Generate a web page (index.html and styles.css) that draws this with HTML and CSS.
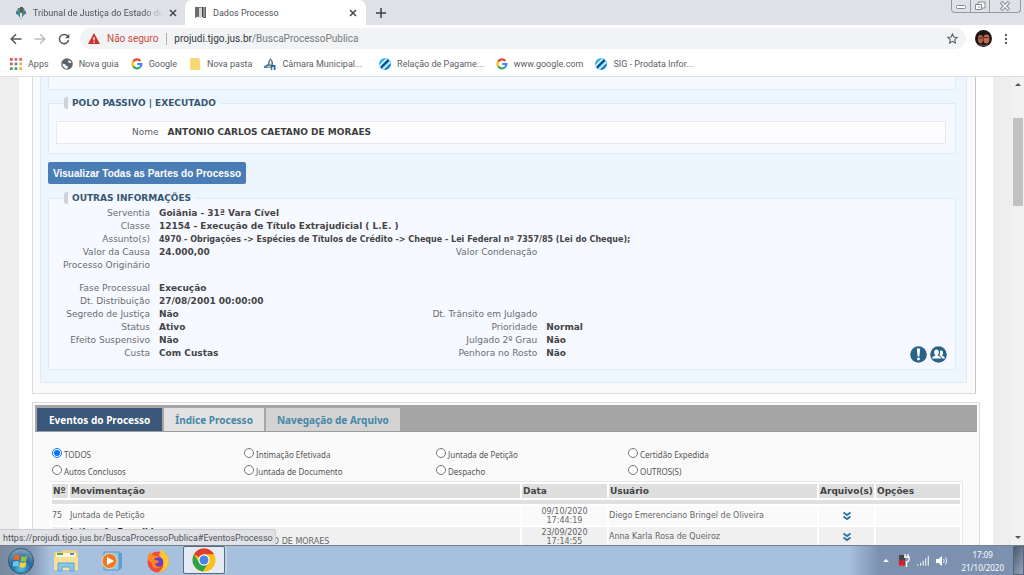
FILE: index.html
```html
<!DOCTYPE html>
<html lang="pt-BR">
<head>
<meta charset="utf-8">
<title>Dados Processo</title>
<link rel="stylesheet" href="styles.css">
</head>
<body>
<svg class="defs" aria-hidden="true">
  <symbol id="google" viewBox="0 0 12 12">
    <g fill="none" stroke-width="2.2"><path d="M2.2 3.6A4.4 4.4 0 0 1 9.3 2.9" stroke="#ea4335"/><path d="M2.2 8.2a4.5 4.5 0 0 1 0-4.6" stroke="#fbbc05"/><path d="M9 9.2a4.4 4.4 0 0 1-6.8-1" stroke="#34a853"/><path d="M6.2 6h4.2A4.4 4.4 0 0 1 9 9.2" stroke="#4285f4"/></g>
  </symbol>
  <symbol id="prodata" viewBox="0 0 12 12">
    <circle cx="6" cy="6" r="6" fill="#35b4e4"/><path d="M.8 8 7.500.8" stroke="#e9f8ff" stroke-width="1.500"/><path d="M2 9.500 9.500 2" stroke="#174a86" stroke-width="1.800"/><path d="M4 11 11 4.200" stroke="#e9f8ff" stroke-width="1.500"/><path d="M6.500 11.500 11.500 6.500" stroke="#2368a8" stroke-width="1.200"/>
  </symbol>
  <symbol id="close" viewBox="0 0 8 8"><path d="M1 1 7 7M7 1 1 7" stroke="#45494d" stroke-width="1.500"/></symbol>
  <symbol id="more" viewBox="0 0 10 10"><path d="M1.500 1.500 5 4l3.500-2.500M1.500 5.500 5 8l3.500-2.500" fill="none" stroke="#2f74a3" stroke-width="1.900"/></symbol>
</svg>

<header class="tabstrip">
  <div class="tab">
    <svg class="fav" viewBox="0 0 12 12"><path d="M3 1h6l1 3-1 4-3 4-3-4-1-4z" fill="#4c8d83"/><path d="M5 0h3v5H5z" fill="#6e5442"/><path d="M1 4l3 1v3L1 7zM8 5l3-1v3L8 8z" fill="#3f7d9b"/><path d="M5 6h2v5H5z" fill="#d9e4cf"/></svg>
    <span class="tab-title faded">Tribunal de Justiça do Estado de</span>
    <button class="icon-btn" aria-label="Fechar guia"><svg class="x"><use href="#close"/></svg></button>
  </div>
  <div class="tab active">
    <svg class="fav wide" viewBox="0 0 13 12"><path d="M1 0h11v10H1z" fill="#8d8d8d"/><path d="M1 0h4v9l-4 2z" fill="#6d6d6d"/><path d="M5 1h3v10H5z" fill="#d4d4d4"/><path d="M8 0h1v10H8z" fill="#444"/><path d="M12 0v11H9v-1h2V0z" fill="#666"/></svg>
    <span class="tab-title">Dados Processo</span>
    <button class="icon-btn" aria-label="Fechar guia"><svg class="x"><use href="#close"/></svg></button>
  </div>
  <button class="icon-btn new-tab" aria-label="Nova guia"><svg viewBox="0 0 10 10" width="10" height="10"><path d="M5 0v10M0 5h10" stroke="#3c4043" stroke-width="1.500"/></svg></button>
  <div class="win-controls">
    <button aria-label="Minimizar"><svg viewBox="0 0 12 10" width="12" height="10"><rect x="1.500" y="4.500" width="9" height="3" rx="1" fill="#fff" stroke="#85888d"/></svg></button>
    <button aria-label="Restaurar"><svg viewBox="0 0 12 10" width="12" height="10"><path d="M4 1h7v6H4z" fill="#fff" stroke="#85888d"/><path d="M1.500 3.500h6v5h-6z" fill="#fff" stroke="#85888d"/><path d="M4 5.500h2v1H4z" fill="#85888d"/></svg></button>
    <button class="win-close" aria-label="Fechar"><svg viewBox="0 0 12 10" width="12" height="10"><path d="M2 1 10 9M10 1 2 9" stroke="#85888d" stroke-width="3.400"/><path d="M2.500 1.500l7 7M9.500 1.500l-7 7" stroke="#f3f4f6" stroke-width="1.600"/></svg></button>
  </div>
</header>

<nav class="toolbar">
  <button class="icon-btn" aria-label="Voltar"><svg viewBox="0 0 12 12" width="12" height="12"><path d="M11.500 6H1.500M6 1.200 1.200 6 6 10.800" fill="none" stroke="#55595e" stroke-width="1.500"/></svg></button>
  <button class="icon-btn" aria-label="Avançar"><svg viewBox="0 0 12 12" width="12" height="12"><path d="M.5 6h10M6 1.200 10.800 6 6 10.800" fill="none" stroke="#bbbdc0" stroke-width="1.500"/></svg></button>
  <button class="icon-btn" aria-label="Recarregar"><svg viewBox="0 0 12 12" width="12" height="12"><path d="M10 3.600A4.600 4.600 0 1 0 10.600 7" fill="none" stroke="#55595e" stroke-width="1.500"/><path d="M11.400.8v4.400H7z" fill="#55595e"/></svg></button>
  <div class="omnibox">
    <svg viewBox="0 0 12 11" width="12" height="11"><path d="M6 0l6 11H0z" fill="#c5352b"/><path d="M6 4v3.500M6 8.500V10" stroke="#fff" stroke-width="1.200"/></svg>
    <span class="insecure">Não seguro</span>
    <span class="url">projudi.tjgo.jus.br<span class="path">/BuscaProcessoPublica</span></span>
    <button class="icon-btn star" aria-label="Favoritar"><svg viewBox="0 0 12 12" width="11" height="11"><path d="M6 1l1.500 3.400 3.700.4-2.800 2.500.8 3.700L6 9.100 2.800 11l.8-3.700L.8 4.800l3.700-.4z" fill="none" stroke="#5f6368" stroke-width="1.200"/></svg></button>
  </div>
  <button class="icon-btn" aria-label="Perfil"><svg viewBox="0 0 17 17" width="17" height="17"><circle cx="8.500" cy="8.500" r="8.500" fill="#1c1715"/><path d="M3 8q0-3 2.500-3T8 8v3q-1 2.500-2.500 2.500T3 11z" fill="#a8654a"/><path d="M8.500 7.500q.5-3 3-3t2.800 3v3q-.5 3-3 3t-2.800-3z" fill="#c4694c"/><path d="M3.500 8h4M9 7.500h4.500" stroke="#54291f" stroke-width="1.200"/><path d="M4 13.500q4 3 9.500 0l-1 2.500h-7z" fill="#5d4a42"/></svg></button>
  <button class="icon-btn" aria-label="Menu"><svg viewBox="0 0 4 12" width="4" height="12" fill="#5f6368"><circle cx="2" cy="2" r="1.200"/><circle cx="2" cy="6" r="1.200"/><circle cx="2" cy="10" r="1.200"/></svg></button>
</nav>

<nav class="bookmarks">
  <a href="#"><svg viewBox="0 0 11 11"><path d="M0 0h2.500v2.500H0zM0 4.200h2.500v2.500H0z" fill="#e2574c"/><path d="M4.200 0h2.500v2.500H4.200zM8.500 0H11v2.500H8.500z" fill="#d8695c"/><path d="M4.200 4.200h2.500v2.500H4.200z" fill="#4a86d9"/><path d="M8.500 4.200H11v2.500H8.500zM8.500 8.500H11V11H8.500z" fill="#eab13c"/><path d="M0 8.500h2.500V11H0zM4.200 8.500h2.500V11H4.200z" fill="#4a9f5c"/></svg>Apps</a>
  <a href="#"><svg viewBox="0 0 12 12"><circle cx="6" cy="6" r="5.800" fill="#5f6368"/><path d="M1.500 5.500l3 1 .8 1.500 1.700.3-.5 2.200-1.500.3Q1.500 9 1.500 5.500zM6 1.500l2 .5-1 1.800 1.500 1.200 2 0Q9.500 2 6 1.500z" fill="#fff"/></svg>Nova guia</a>
  <a href="#"><svg><use href="#google"/></svg>Google</a>
  <a href="#"><svg viewBox="0 0 11 11"><path d="M1 0h8.500v2l.8.8V11H1z" fill="#f6d973"/></svg>Nova pasta</a>
  <a href="#" class="municipal"><svg viewBox="0 0 12 12"><path d="M0 8l4-2 4 3v1H0z" fill="#3f87c4"/><path d="M4 7V4l2.500-4L9 4v5H4z" fill="#5b7384"/><path d="M5.500 6.500V4l1-2 1 2v2.500z" fill="#e8eef0"/><path d="M7 7h4.500v5H7z" fill="#2b6aac"/><path d="M3 8.500l3-1 1 1.500-3 1z" fill="#e4c65a"/><path d="M8 9h2v3H8z" fill="#b9dcf2"/></svg>Câmara Municipal...</a>
  <a href="#"><svg><use href="#prodata"/></svg>Relação de Pagame...</a>
  <a href="#"><svg><use href="#google"/></svg>www.google.com</a>
  <a href="#"><svg><use href="#prodata"/></svg>SIG - Prodata Infor...</a>
</nav>

<div class="viewport">
  <main class="page">
    <section class="panel process">
      <div class="sheet">
        <div class="group cut"></div>
        <fieldset class="group party">
          <legend>POLO PASSIVO | EXECUTADO</legend>
          <div class="party-row"><span>Nome</span><b>ANTONIO CARLOS CAETANO DE MORAES</b></div>
        </fieldset>
        <button class="primary">Visualizar Todas as Partes do Processo</button>
        <fieldset class="group info">
          <legend>OUTRAS INFORMAÇÕES</legend>
          <dl>
            <dt>Serventia</dt><dd class="full">Goiânia - 31ª Vara Cível</dd>
            <dt>Classe</dt><dd class="full">12154 - Execução de Título Extrajudicial ( L.E. )</dd>
            <dt>Assunto(s)</dt><dd class="full small">4970 - Obrigações -&gt; Espécies de Títulos de Crédito -&gt; Cheque - Lei Federal nº 7357/85 (Lei do Cheque);</dd>
            <dt>Valor da Causa</dt><dd>24.000,00</dd><dt>Valor Condenação</dt><dd></dd>
            <dt>Processo Originário</dt><dd class="full"></dd>
          </dl>
          <dl>
            <dt>Fase Processual</dt><dd class="full">Execução</dd>
            <dt>Dt. Distribuição</dt><dd class="full">27/08/2001 00:00:00</dd>
            <dt>Segredo de Justiça</dt><dd>Não</dd><dt>Dt. Trânsito em Julgado</dt><dd></dd>
            <dt>Status</dt><dd>Ativo</dd><dt>Prioridade</dt><dd>Normal</dd>
            <dt>Efeito Suspensivo</dt><dd>Não</dd><dt>Julgado 2º Grau</dt><dd>Não</dd>
            <dt>Custa</dt><dd>Com Custas</dd><dt>Penhora no Rosto</dt><dd>Não</dd>
          </dl>
          <div class="actions">
            <button class="icon-btn" aria-label="Pendências"><svg viewBox="0 0 17 17" width="17" height="17"><circle cx="8.500" cy="8.500" r="8.300" fill="#286388"/><path d="M6.800 2.500h3.400l-.8 8H7.600z" fill="#fff"/><circle cx="8.500" cy="13" r="1.400" fill="#fff"/></svg></button>
            <button class="icon-btn" aria-label="Responsáveis"><svg viewBox="0 0 17 17" width="17" height="17"><circle cx="8.500" cy="8.500" r="8.300" fill="#286388"/><g fill="#fff"><ellipse cx="6.500" cy="6.500" rx="2.300" ry="3"/><path d="M2 12.500q0-2 3.300-2.800V8h2.400v1.700q3.300.8 3.300 2.800zM10 4.500q3.500-.5 3 3-.2 1.500-1 2 3 .8 3 3h-3q-.2-2-2.500-3.200 1-1.800.5-4.800z"/></g></svg></button>
          </div>
        </fieldset>
      </div>
    </section>

    <section class="panel events">
      <div class="subtabs">
        <button class="selected">Eventos do Processo</button>
        <button class="light">Índice Processo</button>
        <button>Navegação de Arquivo</button>
      </div>
      <div class="events-body">
        <div class="filters">
          <label><input type="radio" name="tipo" checked>TODOS</label>
          <label><input type="radio" name="tipo">Intimação Efetivada</label>
          <label><input type="radio" name="tipo">Juntada de Petição</label>
          <label><input type="radio" name="tipo">Certidão Expedida</label>
          <label><input type="radio" name="tipo">Autos Conclusos</label>
          <label><input type="radio" name="tipo">Juntada de Documento</label>
          <label><input type="radio" name="tipo">Despacho</label>
          <label><input type="radio" name="tipo">OUTROS(S)</label>
        </div>
        <table>
          <colgroup><col class="c-num"><col><col class="c-date"><col class="c-user"><col class="c-file"><col class="c-opt"></colgroup>
          <thead>
            <tr><th>Nº</th><th>Movimentação</th><th>Data</th><th>Usuário</th><th>Arquivo(s)</th><th>Opções</th></tr>
            <tr class="rule"><td colspan="6"></td></tr>
          </thead>
          <tbody>
            <tr><td>75</td><td>Juntada de Petição</td><td class="mid">09/10/2020<br>17:44:19</td><td>Diego Emerenciano Bringel de Oliveira</td><td class="mid"><button class="icon-btn" aria-label="Ver arquivos"><svg class="chev"><use href="#more"/></svg></button></td><td></td></tr>
            <tr class="alt"><td></td><td><b>Intimação Expedida</b><br>Para o Polo Passivo | Executado: ANTONIO CAETANO DE MORAES</td><td class="mid">23/09/2020<br>17:14:55</td><td>Anna Karla Rosa de Queiroz</td><td class="mid"><button class="icon-btn" aria-label="Ver arquivos"><svg class="chev"><use href="#more"/></svg></button></td><td></td></tr>
          </tbody>
        </table>
      </div>
    </section>
  </main>
  <div class="scrollbar"><i class="up"></i><span class="track"><span class="thumb"></span></span><i class="down"></i></div>
  <div class="status">https://projudi.tjgo.jus.br/BuscaProcessoPublica#EventosProcesso</div>
</div>

<footer class="taskbar">
  <button class="start" aria-label="Iniciar"><svg viewBox="0 0 26 26" width="26" height="26"><defs><radialGradient id="orb" cx=".5" cy=".8" r=".8"><stop offset="0" stop-color="#4fc0e6"/><stop offset=".5" stop-color="#27679c"/><stop offset="1" stop-color="#8fabbf"/></radialGradient></defs><circle cx="13" cy="13" r="12.500" fill="url(#orb)" stroke="#285577"/><path d="M6 8q3-2 6-.5l-.8 5q-3-1.500-6 .3z" fill="#e8672f"/><path d="M13.200 8q3 1.500 6 0l-.8 5q-3 1.500-6 0z" fill="#8cc63f"/><path d="M5 14q3-1.800 6-.4l-.8 5q-3-1.500-5.500.2z" fill="#6cc4ee"/><path d="M12.200 14.200q3 1.500 6-.1l-.8 5q-3 1.500-6 0z" fill="#fbd03c"/></svg></button>
  <button class="app" aria-label="Explorer"><svg viewBox="0 0 26 24" width="26" height="24"><path d="M1 3h7l2-2h13l2 3v17H1z" fill="#ecd07e"/><path d="M3 4h20v4H3z" fill="#fff7d6"/><path d="M4 5h6" stroke="#58a55c" stroke-width="2"/><path d="M17 5h4" stroke="#4f8ad3" stroke-width="2"/><path d="M1 8h24v13H1z" fill="#f5e09b"/><path d="M5 22v-8h16v8h-4v-4H9v4z" fill="#8ac7e8" stroke="#5fa3cc"/></svg></button>
  <button class="app" aria-label="Media Player"><svg viewBox="0 0 24 24" width="24" height="24"><path d="M9 3l13 1v15l-3 2V5z" fill="#5aa0d0"/><path d="M4 3h15v18H4z" fill="#8ec6e8" stroke="#5b9cc8"/><circle cx="9.500" cy="12" r="7.500" fill="#ec7a22" stroke="#f7d6b2"/><path d="M7 8l7 4-7 4z" fill="#fff"/></svg></button>
  <button class="app" aria-label="Firefox"><svg viewBox="0 0 24 24" width="24" height="24"><circle cx="12" cy="13" r="10.500" fill="#f04a3e"/><path d="M13 6q1-4 4-6 0 3 3 5.500 4 4 2.500 10Q20 23 12 23.500 19 19 17 12z" fill="#ffc62e"/><path d="M2 11Q1 7 4 3q1 3 4 3.500 4 .5 6 2l-4 3-2 4z" fill="#ff8a23"/><circle cx="12.500" cy="13" r="4.800" fill="#6b3fc4"/><path d="M6 12q2-2 7 0-1 3-4 2.500 1 4 6 3-3 3-7 1-3-2-2-6.500z" fill="#ff8324"/></svg></button>
  <button class="app running" aria-label="Chrome"><svg viewBox="0 0 24 24" width="24" height="24"><circle cx="12" cy="12" r="11.500" fill="#fbc116"/><path d="M12 12 2 6.300A11.500 11.500 0 0 1 22 6.300H12z" fill="#de3d31"/><path d="M2 6.300A11.500 11.500 0 0 0 11 23.400l5.500-9L7.500 15z" fill="#2da24c"/><circle cx="12" cy="12" r="5.700" fill="#fff"/><circle cx="12" cy="12" r="4.500" fill="#4a83e3"/></svg></button>
  <div class="tray">
    <i class="tray-up"></i>
    <svg viewBox="0 0 12 14" width="12" height="14"><path d="M1 1h6v10H1z" fill="#4b4542"/><path d="M7 0v3M10 0v3M6 3h5v3q-1 2-2.500 2v5" fill="none" stroke="#fff" stroke-width="1.300"/><path d="M1.500 6.500l5 5M6.500 6.500l-5 5" stroke="#df1f29" stroke-width="2.600"/></svg>
    <svg viewBox="0 0 14 12" width="14" height="12"><path d="M1 11V9h1.500v2zM4 11V7.500h1.500V11zM6.500 11V5.500H8V11zM9 11V3h1.500v8zM11.500 11V0.500H13V11z" fill="#fff" stroke="#687d96" stroke-width=".4"/></svg>
    <svg viewBox="0 0 12 12" width="12" height="12"><path d="M0 4h2.500L6 1v10L2.500 8H0z" fill="#fff"/><path d="M7.500 4q1.500 2 0 4M9.500 2.500q2.600 3.500 0 7" fill="none" stroke="#e8eef5"/></svg>
    <time>17:09<br>21/10/2020</time>
    <button class="desktop" aria-label="Mostrar área de trabalho"></button>
  </div>
</footer>
</body>
</html>
```

FILE: styles.css
```css
* { box-sizing: border-box; }

body {
  margin: 0;
  height: 100vh;
  display: flex;
  flex-direction: column;
  overflow: hidden;
  font-family: Roboto, "Noto Sans", sans-serif;
  font-size: 9px;
  color: #5f6368;
  background: #fff;
}

button { font: inherit; border: 0; padding: 0; background: none; }
svg { display: block; flex: none; }
.defs { position: absolute; width: 0; height: 0; }
.icon-btn { display: flex; flex: none; align-items: center; justify-content: center; }

/* Browser tabs */
.tabstrip { flex: none; display: flex; height: 25px; background: #dee1e6; }
.tab { display: flex; align-items: center; gap: 6px; width: 185px; padding: 0 8px 0 15px; }
.tab.active { width: 181px; padding: 0 9px; background: #fff; border-radius: 7px 7px 0 0; }
.fav { width: 12px; height: 12px; }
.fav.wide { width: 13px; }
.tab-title { flex: 1; overflow: hidden; white-space: nowrap; color: #4f5358; }
.faded { mask-image: linear-gradient(90deg, #000 85%, transparent); }
.x { width: 8px; height: 8px; }
.new-tab { width: 30px; }
.win-controls {
  display: flex;
  margin: 0 3px 0 auto;
  height: 13px;
  border: 1px solid #96999e;
  border-top: 0;
  border-radius: 0 0 4px 4px;
}
.win-controls button { display: flex; align-items: center; justify-content: center; width: 19px; border-right: 1px solid #96999e; }
.win-controls .win-close { width: 30px; border-right: 0; }

/* Address bar */
.toolbar { flex: none; display: flex; align-items: center; gap: 12px; height: 27px; padding: 0 16px 0 10px; }
.omnibox { flex: 1; display: flex; align-items: center; height: 21px; margin: 0 -3px 0 -2px; padding: 0 8px; border-radius: 11px; background: #f1f3f4; font-size: 10px; }
.insecure { margin-left: 7px; padding-right: 8px; border-right: 1px solid #aeb1b5; line-height: 12px; color: #cf4a40; }
.url { margin-left: 7px; color: #33363a; }
.path { color: #777b80; }
.star { margin-left: auto; }

.bookmarks { flex: none; display: flex; align-items: center; gap: 12px; height: 25px; padding: 0 10px 1px; border-bottom: 1px solid #dfe2e5; }
.bookmarks a { display: flex; align-items: center; gap: 6px; color: #5a5e63; text-decoration: none; white-space: nowrap; }
.bookmarks svg { width: 12px; height: 12px; }
.bookmarks .municipal { margin-right: 5px; }

/* Page */
.viewport { position: relative; flex: 1; min-height: 0; display: flex; overflow: hidden; background: #eee; font-family: "DejaVu Sans", Verdana, sans-serif; }
.page { flex: 1; min-width: 0; margin: 0 19px; padding: 0 13px; background: #fff; }
.panel { border: 1px solid #dcdcdc; background: #fafafa; }
.process { margin-right: 4px; padding: 0 8px 10px 7px; border-top: 0; border-right-color: #c8c8c8; }
.sheet { padding: 0 10px 12px 7px; border: 1px solid #e0eaf4; border-top: 0; background: #edf5ff; }
.group { min-width: 0; margin: 0; padding: 0; border: 1px solid #e0e8f2; background: #f6f9ff; }
.cut { height: 13px; margin-bottom: 7px; border-top: 0; }
legend { margin-left: 15px; padding: 0 5px 0 4px; border-left: 4px solid #cfd2d6; border-radius: 3px; line-height: 12px; font-weight: bold; color: #39566f; }
.party { padding: 0 9px 9px 7px; }
.party legend { margin-left: 8px; }
.party-row { display: flex; gap: 9px; margin-top: 12px; padding: 4px 0 4px 75px; border: 1px solid #e6eaf0; background: #fdfdff; line-height: 13px; }
.party-row b { color: #3d3d3d; }
.primary { display: block; margin: 8px 0; padding: 0 5px; height: 22px; border-radius: 2px; background: #4a7db6; color: #fff; font: bold 10px "Liberation Sans", Arial, sans-serif; }
.info { position: relative; padding-bottom: 9px; }
.info dl { display: grid; grid-template-columns: 101px 25fr 120px 41fr; column-gap: 9px; margin: 3px 0 0; line-height: 13px; }
.info dl + dl { margin-top: 10px; }
dt { text-align: right; white-space: nowrap; color: #6a6d70; }
dd { margin: 0; min-height: 13px; font-weight: bold; color: #444; white-space: nowrap; }
.full { grid-column: span 3; }
.small { font-size: 8px; }
.actions { position: absolute; right: 8px; bottom: 6px; display: flex; gap: 3px; }

/* Events */
.events { margin-top: 8px; padding: 2px; }
.subtabs { display: flex; gap: 2px; padding: 3px 2px 0; height: 27px; background: #a6a6a6; border-bottom: 1px solid #999; font: bold 10px "Noto Sans", sans-serif; }
.subtabs button { padding: 0 11px; background: #d3d3d3; color: #4588a6; }
.subtabs .light { background: #e2e2e2; }
.subtabs .selected { padding: 0 12px; background: #39587a; color: #fff; }
.events-body { padding: 14px 14px 0 15px; }
.filters { display: grid; grid-template-columns: repeat(4, 1fr); margin-right: -6px; margin-left: -1px; padding: 0 0 1px 2px; max-width: 770px; font-family: "Noto Sans", sans-serif; font-size: 8px; }
.filters label { display: flex; align-items: center; gap: 2px; height: 17px; color: #555; }
.filters input { width: 10px; height: 10px; margin: 0 0 3px 1px; }
table { width: 100%; table-layout: fixed; border-collapse: separate; border-spacing: 2px; border: 1px solid #e8e8e8; border-width: 1px 1px 0 0; font-size: 8px; line-height: 9px; background: #fff; }
.c-num { width: 16px; }
.c-date { width: 85px; }
.c-user { width: 208px; }
.c-file { width: 55px; }
.c-opt { width: 84px; }
th { padding: 0 1px; height: 14px; background: #dfdfdf; text-align: left; font-size: 9px; color: #444; white-space: nowrap; }
td { padding: 0; height: 19px; background: #fafafa; color: #666; white-space: nowrap; }
.alt td { background: #f0f0f0; }
.rule td { height: 4px; background: #dfdfdf; }
td b { color: #222; }
.mid { text-align: center; }
.mid .icon-btn { margin: 0 auto; }
.chev { width: 10px; height: 10px; }

.scrollbar { display: flex; flex-direction: column; align-items: center; width: 12px; padding: 6px 0; background: #f1f1f1; }
.up, .down { width: 0; height: 0; border: 3px solid transparent; }
.up { border-top: 0; border-bottom-color: #555; }
.down { border-bottom: 0; border-top-color: #555; }
.track { flex: 1; width: 10px; padding-top: 32px; }
.thumb { display: block; height: 21%; background: #c1c1c1; }

.status { position: absolute; left: 0; bottom: 0; padding: 0 2px 0 3px; height: 16px; line-height: 16px; border: 1px solid #ccc; border-width: 1px 1px 0 0; border-radius: 0 3px 0 0; background: #e0e2e6; color: #4f5358; font-family: Roboto, "Noto Sans", sans-serif; font-size: 9px; }

/* Taskbar */
.taskbar { flex: none; display: flex; height: 30px; border-top: 1px solid #75808e; background: linear-gradient(90deg, #78899e 0, #8194ae 30px, #a6c0de 50px, #a6c0de calc(100% - 175px), #7b91af calc(100% - 145px), #7b91af 100%); }
.taskbar button { display: flex; align-items: center; justify-content: center; }
.start { width: 41px; }
.app { width: 46px; padding-left: 4px; }
.taskbar .running { width: 42px; margin: 0 0 1px 4px; padding: 0; border: 1px solid #5c6b7e; border-radius: 2px; background: #e3eaf3; box-shadow: 3px 0 0 -1px #c0d0e4; }
.tray { display: flex; align-items: center; gap: 6px; margin-left: auto; color: #fff; font-family: "Noto Sans", sans-serif; }
.tray-up { border: 3px solid transparent; border-top: 0; border-bottom-color: #fff; margin-right: 3px; }
time { margin: 0 3px 0 7px; text-align: center; font-size: 8px; line-height: 13px; }
.taskbar .desktop { width: 11px; height: 29px; border: 1px solid #56667a; background: linear-gradient(120deg, #4d5b6e, #94a5bb); }
```
